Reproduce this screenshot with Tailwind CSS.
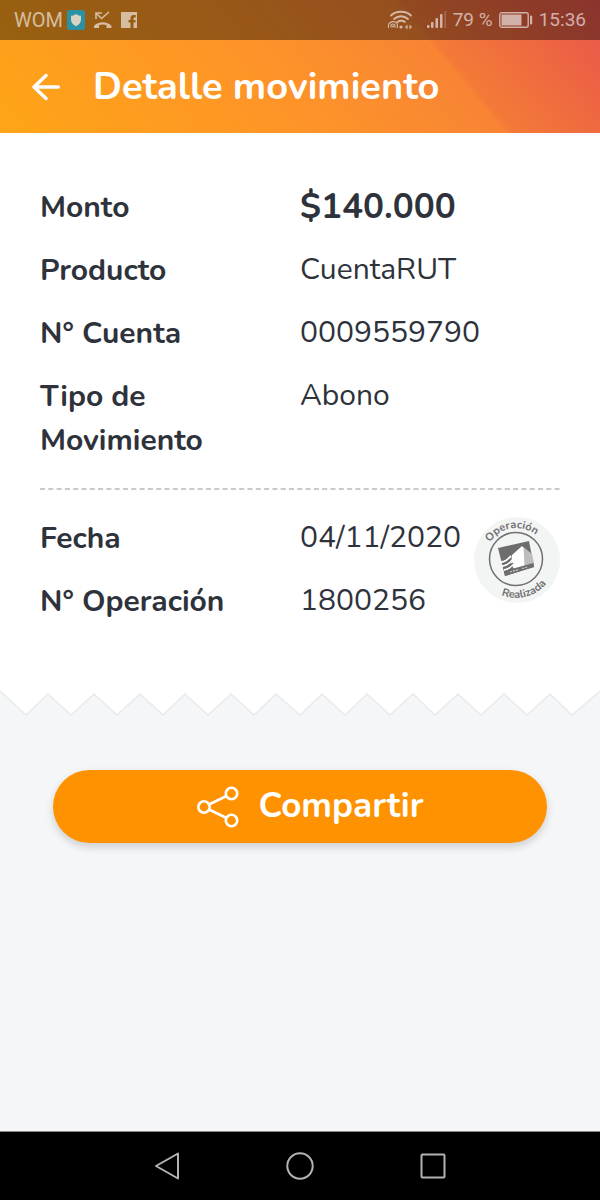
<!DOCTYPE html>
<html lang="es">
<head>
  <meta charset="UTF-8">
  <meta name="viewport" content="width=device-width, initial-scale=1.0">
  <title>Detalle movimiento</title>
  <script src="https://cdn.jsdelivr.net/npm/@tailwindcss/browser@4"></script>
</head>
<body class="min-h-screen flex flex-col bg-[#f5f6f8] text-[#2e323b] font-['Nunito','Open_Sans',sans-serif]">

  <header class="bg-[linear-gradient(50deg,#ffa516_0%,#fd922a_48%,#f88434_71%,#f47a37_72%,#ec6244_90%,#e8574f_100%)] text-white">
    <!-- Status bar -->
    <div class="h-10 px-[14px] flex items-center justify-between bg-black/40 text-white/60 text-[19px] font-['Roboto',sans-serif]">
      <div class="flex items-center gap-1">
        <span class="text-xl">WOM</span>
        <svg class="w-[18px] h-5" viewBox="0 0 18 20">
          <rect width="18" height="20" rx="3" fill="#2b92a5"/>
          <path d="M9 4c1.500 1.200 3 1.700 5 1.800v4c0 3-2 5-5 6.400-3-1.400-5-3.400-5-6.400v-4C6 5.700 7.500 5.200 9 4z" fill="#d9d3c4"/>
        </svg>
        <svg class="w-5 h-[18px] ml-1" viewBox="0 0 20 18" fill="none" stroke="currentColor" stroke-width="1.600">
          <path d="M3 8V2h6M3.500 2.500l5 5L16 1"/>
          <path d="M1 17v-2.300C5.500 10 14 10 18.500 14.700V17h-5v-3c-2.500-.8-5-.8-7.500 0v3z" fill="currentColor" stroke="none"/>
        </svg>
        <svg class="w-4 h-4 ml-1" viewBox="0 0 16 16" fill="currentColor">
          <path d="M0 0h16v16h-3.500v-5.500h2V8h-2V6.500c0-.8.4-1.100 1.200-1.100h1V3h-2c-2.200 0-3.200 1.300-3.200 3.300V8h-2v2.500h2V16H0z"/>
        </svg>
      </div>
      <div class="flex items-center gap-[6px]">
        <svg class="w-[26px] h-5" viewBox="0 0 26 20" fill="none" stroke="currentColor" stroke-width="1.800" stroke-linecap="round">
          <path d="M4 5.500C9 .5 19 .5 24 5.500M7 9c4-3.700 10-3.700 14 0M10.500 12c2-1.700 5.500-1.700 7.500 0"/>
          <path d="M1.500 17.500c-2-6 9-9 9-1.500 0 .8-.2 1.200-.4 1.500M4 17c-1-4 4.500-4 4 0" stroke-width="1.200"/>
          <circle cx="6" cy="16.500" r="1" fill="currentColor" stroke="none"/>
          <circle cx="14" cy="17" r="1.600" fill="currentColor" stroke="none"/>
          <path d="M20.500 14.500L18 17l2.500 2.500zM22.500 14.500L25 17l-2.500 2.500z" fill="currentColor" stroke="none"/>
        </svg>
        <svg class="w-5 h-[18px] ml-2" viewBox="0 0 20 18" fill="currentColor">
          <rect y="14" width="2.500" height="3" rx="1"/>
          <rect x="4" y="11" width="2.500" height="6" rx="1"/>
          <rect x="8.500" y="7" width="2.500" height="10" rx="1"/>
          <rect x="13" y="3" width="2.500" height="14" rx="1"/>
          <rect x="17.500" width="1.500" height="17" opacity=".35"/>
        </svg>
        <span>79 %</span>
        <svg class="w-[34px] h-4" viewBox="0 0 34 16">
          <rect x=".8" y=".8" width="28.400" height="14.400" rx="2" fill="none" stroke="currentColor" stroke-width="1.400"/>
          <rect x="2.500" y="2.500" width="20" height="11" fill="currentColor"/>
          <rect x="31" y="3.500" width="2.200" height="9" rx="1" fill="currentColor"/>
        </svg>
        <span>15:36</span>
      </div>
    </div>

    <!-- App bar -->
    <div class="h-[93px] px-8 flex items-center gap-[33px]">
      <button type="button" aria-label="Volver">
        <svg class="w-7 h-7" viewBox="0 0 28 28" fill="none" stroke="currentColor" stroke-width="3.400" stroke-linecap="round" stroke-linejoin="round">
          <path d="M26.300 14H2M14 2.500L2 14l12 11.500"/>
        </svg>
      </button>
      <h1 class="text-[38px] font-bold">Detalle movimiento</h1>
    </div>
  </header>

  <main class="flex-1">
    <section class="bg-white px-10 pt-[53px] pb-[66px]">
      <dl class="grid grid-cols-2 gap-y-[19px] pb-[25px] text-[30px]">
        <dt class="leading-[44px] font-bold">Monto</dt>
        <dd class="leading-[41px] text-[35px] font-bold">$140.000</dd>
        <dt class="leading-[44px] font-bold">Producto</dt>
        <dd class="leading-[41px]">CuentaRUT</dd>
        <dt class="leading-[44px] font-bold">N° Cuenta</dt>
        <dd class="leading-[41px]">0009559790</dd>
        <dt class="leading-[44px] font-bold">Tipo de Movimiento</dt>
        <dd class="leading-[41px]">Abono</dd>
      </dl>

      <svg class="block w-full h-[2px]" aria-hidden="true">
        <line x2="100%" y1="1" y2="1" stroke="#cacaca" stroke-width="2" stroke-dasharray="5 3.300"/>
      </svg>

      <div class="relative pt-[27px]">
        <dl class="grid grid-cols-2 gap-y-[19px] text-[30px]">
          <dt class="leading-[44px] font-bold">Fecha</dt>
          <dd class="leading-[41px]">04/11/2020</dd>
          <dt class="leading-[44px] font-bold">N° Operación</dt>
          <dd class="leading-[41px]">1800256</dd>
        </dl>

        <!-- Stamp -->
        <svg class="absolute top-[27px] right-0 w-[86px] h-[86px] overflow-visible" viewBox="0 0 86 86">
          <defs>
            <path id="arc-top" d="M11 42A31 31 0 0 1 73 42"/>
            <path id="arc-bottom" d="M3 42A39 39 0 0 0 81 42"/>
          </defs>
          <circle cx="43" cy="43" r="43" fill="#f3f4f4"/>
          <circle cx="42" cy="42" r="26.500" fill="none" stroke="#707070" stroke-width="1.500"/>
          <path d="M24 31l31-7 5 26-29 9z" fill="#6d6d6d"/>
          <path d="M38 38l10-9 3 3v17l-11 3-3-5z" fill="#fff"/>
          <path d="M49.500 30l8.500 7 2 9.500-9.500 2.500z" fill="#bdbdbd"/>
          <path d="M27 45c4 0 6-2 10-6M28 49c4 0 7-2 10-6M30 53c4 0 6-2 9-6" fill="none" stroke="#fff" stroke-width="1.800"/>
          <path d="M28 47c4 0 6-2 9-5M29 51c4 0 7-2 10-5" fill="none" stroke="#6d6d6d" stroke-width="1.500"/>
          <path d="M30 54l29.500-8 .5 4-29 9z" fill="#6d6d6d"/>
          <path d="M36 55l9-2.500M48 51.500l6-1.500" stroke="#ccc" stroke-width="1.200" stroke-dasharray="2 1"/>
          <g fill="#707070" font-size="11" font-weight="700" text-anchor="middle">
            <text><textPath href="#arc-top" startOffset="45%">Operación</textPath></text>
            <text><textPath href="#arc-bottom" startOffset="58%">Realizada</textPath></text>
          </g>
        </svg>
      </div>
    </section>

    <!-- Torn paper edge -->
    <svg class="block w-full h-[26px]" viewBox="0 0 600 26" preserveAspectRatio="none" aria-hidden="true">
      <path d="M0 0V1L26 25 48 4 71 25 94 4 117 25 140 4 163 25 185 4 208 25 231 4 254 25 276 4 300 25 322 4 345 25 367 4 390 25 413 4 435 25 458 4 481 25 504 4 527 25 550 4 572 25 600 1V0z" fill="#fff"/>
      <path d="M0 1L26 25 48 4 71 25 94 4 117 25 140 4 163 25 185 4 208 25 231 4 254 25 276 4 300 25 322 4 345 25 367 4 390 25 413 4 435 25 458 4 481 25 504 4 527 25 550 4 572 25 600 1" fill="none" stroke="#e9eaeb" stroke-width="1.500"/>
    </svg>

    <div class="px-[53px] pt-[54px] pb-10">
      <button type="button" class="w-full h-[73px] pl-5 rounded-full bg-[#ff9200] text-white text-[35px] font-bold flex items-center justify-center gap-5 shadow-[0_4px_8px_rgba(0,0,0,0.16)]">
        <svg class="w-[42px] h-[42px]" viewBox="0 0 42 42" fill="none" stroke="currentColor" stroke-width="2.600">
          <circle cx="7" cy="21" r="5.700"/>
          <circle cx="34.500" cy="7.500" r="5.700"/>
          <circle cx="34.500" cy="34.500" r="5.700"/>
          <path d="M12 18.500L29.500 10M12 23.500L29.500 32"/>
        </svg>
        Compartir
      </button>
    </div>
  </main>

  <!-- System navigation -->
  <nav class="h-[69px] px-[100px] grid grid-cols-3 bg-black border-t border-[#8a8a8a] text-[#b3b3b3]">
    <button type="button" aria-label="Atrás" class="flex items-center justify-center">
      <svg class="w-7 h-7" viewBox="0 0 28 28" fill="none" stroke="currentColor" stroke-width="2" stroke-linejoin="round">
        <path d="M25 1.500v25L3 14z"/>
      </svg>
    </button>
    <button type="button" aria-label="Inicio" class="flex items-center justify-center">
      <svg class="w-7 h-7" viewBox="0 0 28 28" fill="none" stroke="currentColor" stroke-width="2">
        <circle cx="14" cy="14" r="12.700"/>
      </svg>
    </button>
    <button type="button" aria-label="Recientes" class="flex items-center justify-center">
      <svg class="w-7 h-7" viewBox="0 0 28 28" fill="none" stroke="currentColor" stroke-width="2">
        <rect x="2.500" y="2.500" width="23" height="23" rx="1"/>
      </svg>
    </button>
  </nav>

</body>
</html>
